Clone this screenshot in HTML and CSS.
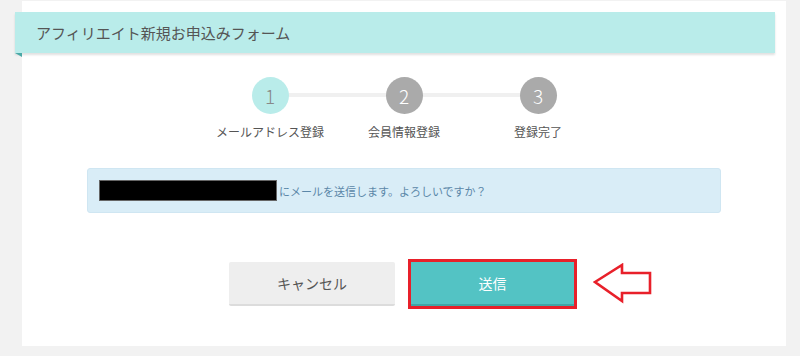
FILE: index.html
```html
<!DOCTYPE html>
<html lang="ja">
<head>
  <meta charset="UTF-8" />
  <meta name="viewport" content="width=device-width, initial-scale=1.0"/>
  <title>アフィリエイト新規お申込みフォーム</title>
  <link rel="stylesheet" href="styles.css">
</head>
<body>

<div class="form-box">
  <div class="form-title">アフィリエイト新規お申込みフォーム</div>

  <div class="steps">
    <div class="step active">
      <div class="step-num">1</div>
      <div class="step-label">メールアドレス登録</div>
    </div>
    <div class="step">
      <div class="step-num">2</div>
      <div class="step-label">会員情報登録</div>
    </div>
    <div class="step">
      <div class="step-num">3</div>
      <div class="step-label">登録完了</div>
    </div>
  </div>

  <div class="alert-info">
    <span class="masked"></span>
    <span>にメールを送信します。よろしいですか？</span>
  </div>

  <div class="buttons">
    <a href="#" class="btn btn-cancel">キャンセル</a>
    <a href="#" class="btn btn-send">送信</a>
    <svg class="arrow" width="60" height="42" viewBox="0 0 60 42">
      <polygon points="2,19 29,2 29,10 57,10 57,30 29,30 29,38" fill="#fff" stroke="#e8202a" stroke-width="2.6" stroke-linejoin="miter"/>
    </svg>
  </div>
</div>

</body>
</html>
```

FILE: styles.css
```css
body {
  font-family: "Noto Sans CJK JP", "Noto Sans", sans-serif;
  margin: 0;
  background: #f2f2f2;
  padding-top: 1px;
}

.form-box {
  margin-left: 22px;
  width: 764px;
  height: 345px;
  background: white;
  padding-top: 11px;
  box-sizing: border-box;
  color: #555;
}

.form-title {
  position: relative;
  margin-left: -7px;
  width: 760px;
  height: 41px;
  box-sizing: border-box;
  padding-left: 21px;
  line-height: 41px;
  font-size: 15px;
  color: #555;
  background: #b9ecea;
  box-shadow: 0 2px 2px rgba(0,0,0,0.12);
}

.form-title::after {
  content: "";
  position: absolute;
  left: 0;
  bottom: -4px;
  border-top: 4px solid #4aa8a6;
  border-left: 7px solid transparent;
}

.steps {
  display: flex;
  justify-content: center;
  margin-top: 24px;
}

.step {
  position: relative;
  width: 134px;
  display: flex;
  flex-direction: column;
  align-items: center;
}

.step + .step::before {
  content: "";
  position: absolute;
  top: 16px;
  left: -67px;
  width: 134px;
  height: 4px;
  background: #f0f0f0;
}

.step-num {
  position: relative;
  z-index: 1;
  width: 37px;
  height: 37px;
  border-radius: 50%;
  background: #aaa;
  color: white;
  font-size: 19px;
  font-weight: 300;
  line-height: 37px;
  text-align: center;
}

.step.active .step-num {
  background: #b9ecea;
  color: #888;
}

.step-label {
  margin-top: 9px;
  font-size: 12px;
  color: #555;
  white-space: nowrap;
}

.alert-info {
  display: flex;
  align-items: center;
  margin: 28px 65px 0;
  height: 45px;
  box-sizing: border-box;
  padding-left: 11px;
  background: #d9edf7;
  border: 1px solid #cfe6f2;
  border-radius: 3px;
  font-size: 11px;
  color: #5b87a8;
}

.masked {
  display: block;
  width: 178px;
  height: 21px;
  box-sizing: border-box;
  background: #000;
  border: 1px solid #666;
  margin-right: 2px;
}

.buttons {
  position: relative;
  display: flex;
  justify-content: center;
  gap: 16px;
  margin-top: 49px;
  padding-right: 5px;
}

.btn {
  display: block;
  height: 44px;
  box-sizing: border-box;
  line-height: 42px;
  font-size: 14px;
  text-align: center;
  text-decoration: none;
}

.btn-cancel {
  width: 166px;
  background: #eee;
  color: #555;
  border-radius: 2px;
  border-bottom: 2px solid #dcdcdc;
}

.btn-send {
  width: 163px;
  background: #53c3c4;
  color: white;
  border-bottom: 2px solid #40a6a6;
  outline: 3px solid #e8202a;
}

.arrow {
  position: absolute;
  left: 571px;
  top: 1px;
}
```
